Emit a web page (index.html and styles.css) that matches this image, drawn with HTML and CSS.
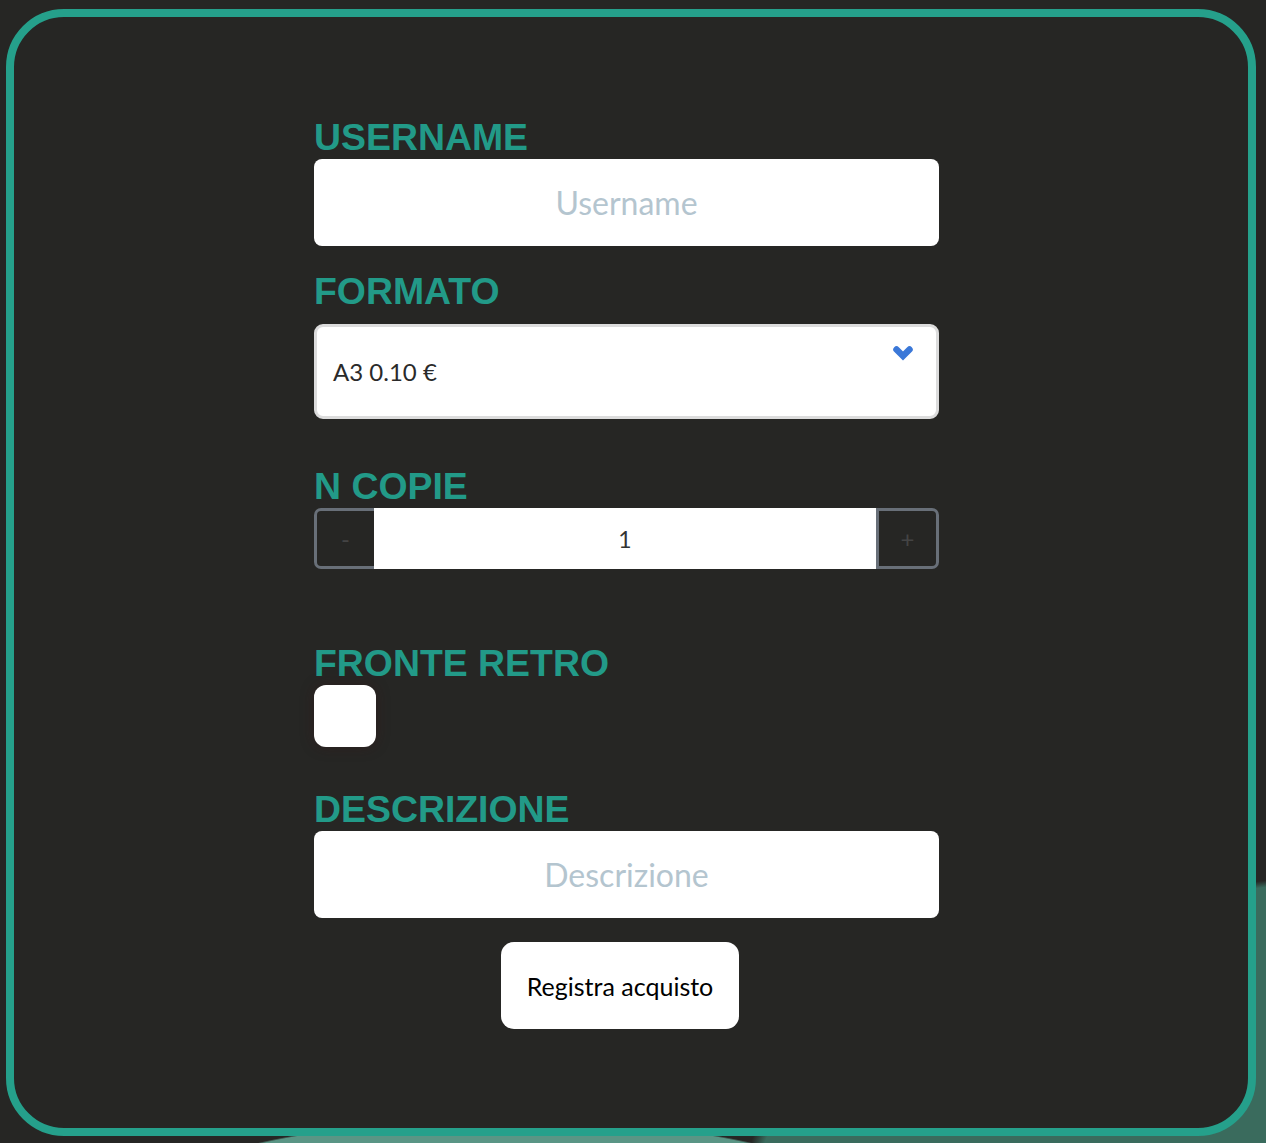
FILE: index.html
```
<!DOCTYPE html>
<html lang="it">
<head>
<meta charset="utf-8">
<title>Registra acquisto</title>
<link rel="stylesheet" href="styles.css">
</head>
<body>
<div class="card">
  <form class="form">
    <label class="label">USERNAME</label>
    <input class="field" type="text" placeholder="Username">

    <label class="label label-formato">FORMATO</label>
    <div class="select">
      <span class="select-text">A3 0.10 €</span>
      <svg class="select-arrow" width="24" height="18" viewBox="0 0 24 18">
        <path d="M5.5 5.5 L12 12 L18.5 5.5" fill="none" stroke="#3b78d8" stroke-width="6.5" stroke-linecap="round" stroke-linejoin="miter"/>
      </svg>
    </div>

    <label class="label label-copie">N COPIE</label>
    <div class="stepper">
      <button type="button" class="step step-minus">-</button>
      <div class="step-value">1</div>
      <button type="button" class="step step-plus">+</button>
    </div>

    <label class="label label-fronte">FRONTE RETRO</label>
    <div class="check"></div>

    <label class="label label-descr">DESCRIZIONE</label>
    <input class="field" type="text" placeholder="Descrizione">

    <button type="button" class="submit">Registra acquisto</button>
  </form>
</div>
</body>
</html>
```
FILE: styles.css
```
html, body {
  margin: 0;
  padding: 0;
}
body {
  width: 1266px;
  height: 1143px;
  overflow: hidden;
  background-color: #262624;
  background-image:
    radial-gradient(ellipse 320px 62px at 505px 1182px, #5a9585 98%, rgba(90,149,133,0) 100%),
    radial-gradient(ellipse 700px 330px at 1440px 1200px, #3a6b5d 98%, rgba(58,107,93,0) 100%);
  background-repeat: no-repeat;
  font-family: Lato, "Open Sans", sans-serif;
  padding-top: 9px;
  box-sizing: border-box;
}
.card {
  box-sizing: border-box;
  margin-left: 6px;
  width: 1250px;
  height: 1127px;
  border: 8px solid #25a08b;
  border-radius: 58px;
  background: #262624;
  padding: 99px 0 0 300px;
}
.form {
  width: 625px;
  display: flex;
  flex-direction: column;
  align-items: flex-start;
}
.label {
  display: block;
  font-family: "Liberation Sans", Arial, sans-serif;
  font-weight: bold;
  font-size: 37.4px;
  line-height: 42px;
  height: 42px;
  color: #229a88;
  margin-bottom: 1px;
}
.field {
  box-sizing: border-box;
  width: 625px;
  height: 87px;
  border: none;
  border-radius: 8px;
  background: #fff;
  text-align: center;
  font-family: Lato, "Open Sans", sans-serif;
  font-size: 32px;
  color: #333;
  outline: none;
  padding: 0 10px;
}
.field::placeholder {
  color: #b4c5cf;
}
.label-formato {
  margin-top: 24px;
  margin-bottom: 12px;
}
.select {
  box-sizing: border-box;
  width: 625px;
  height: 95px;
  border: 3px solid #dcdcdc;
  border-radius: 9px;
  background: #fff;
  display: flex;
  align-items: center;
  padding-left: 16px;
  position: relative;
}
.select-text {
  font-size: 24px;
  color: #2a2a2a;
}
.select-arrow {
  position: absolute;
  right: 21px;
  top: 17px;
}
.label-copie {
  margin-top: 46px;
  margin-bottom: 1px;
}
.stepper {
  display: flex;
  width: 625px;
  height: 61px;
}
.step {
  box-sizing: border-box;
  height: 61px;
  background: transparent;
  border: 3px solid #686f78;
  color: #444;
  font-family: Lato, sans-serif;
  font-size: 24px;
  padding: 0;
}
.step-minus {
  width: 60px;
  border-radius: 7px 0 0 7px;
  border-right-width: 0;
}
.step-plus {
  width: 63px;
  border-radius: 0 7px 7px 0;
}
.step-value {
  flex: 1;
  background: #fff;
  display: flex;
  align-items: center;
  justify-content: center;
  font-size: 23px;
  color: #333;
}
.label-fronte {
  margin-top: 73px;
  margin-bottom: 1px;
}
.check {
  width: 62px;
  height: 62px;
  border-radius: 12px;
  background: #fff;
  box-shadow: 0 0 14px rgba(60, 20, 20, 0.35);
}
.label-descr {
  margin-top: 41px;
  margin-bottom: 1px;
}
.submit {
  margin-top: 24px;
  margin-left: 187px;
  width: 238px;
  height: 87px;
  border: none;
  border-radius: 13px;
  background: #fff;
  color: #000;
  font-family: Lato, "Open Sans", sans-serif;
  font-size: 25px;
  padding: 0;
}
```
